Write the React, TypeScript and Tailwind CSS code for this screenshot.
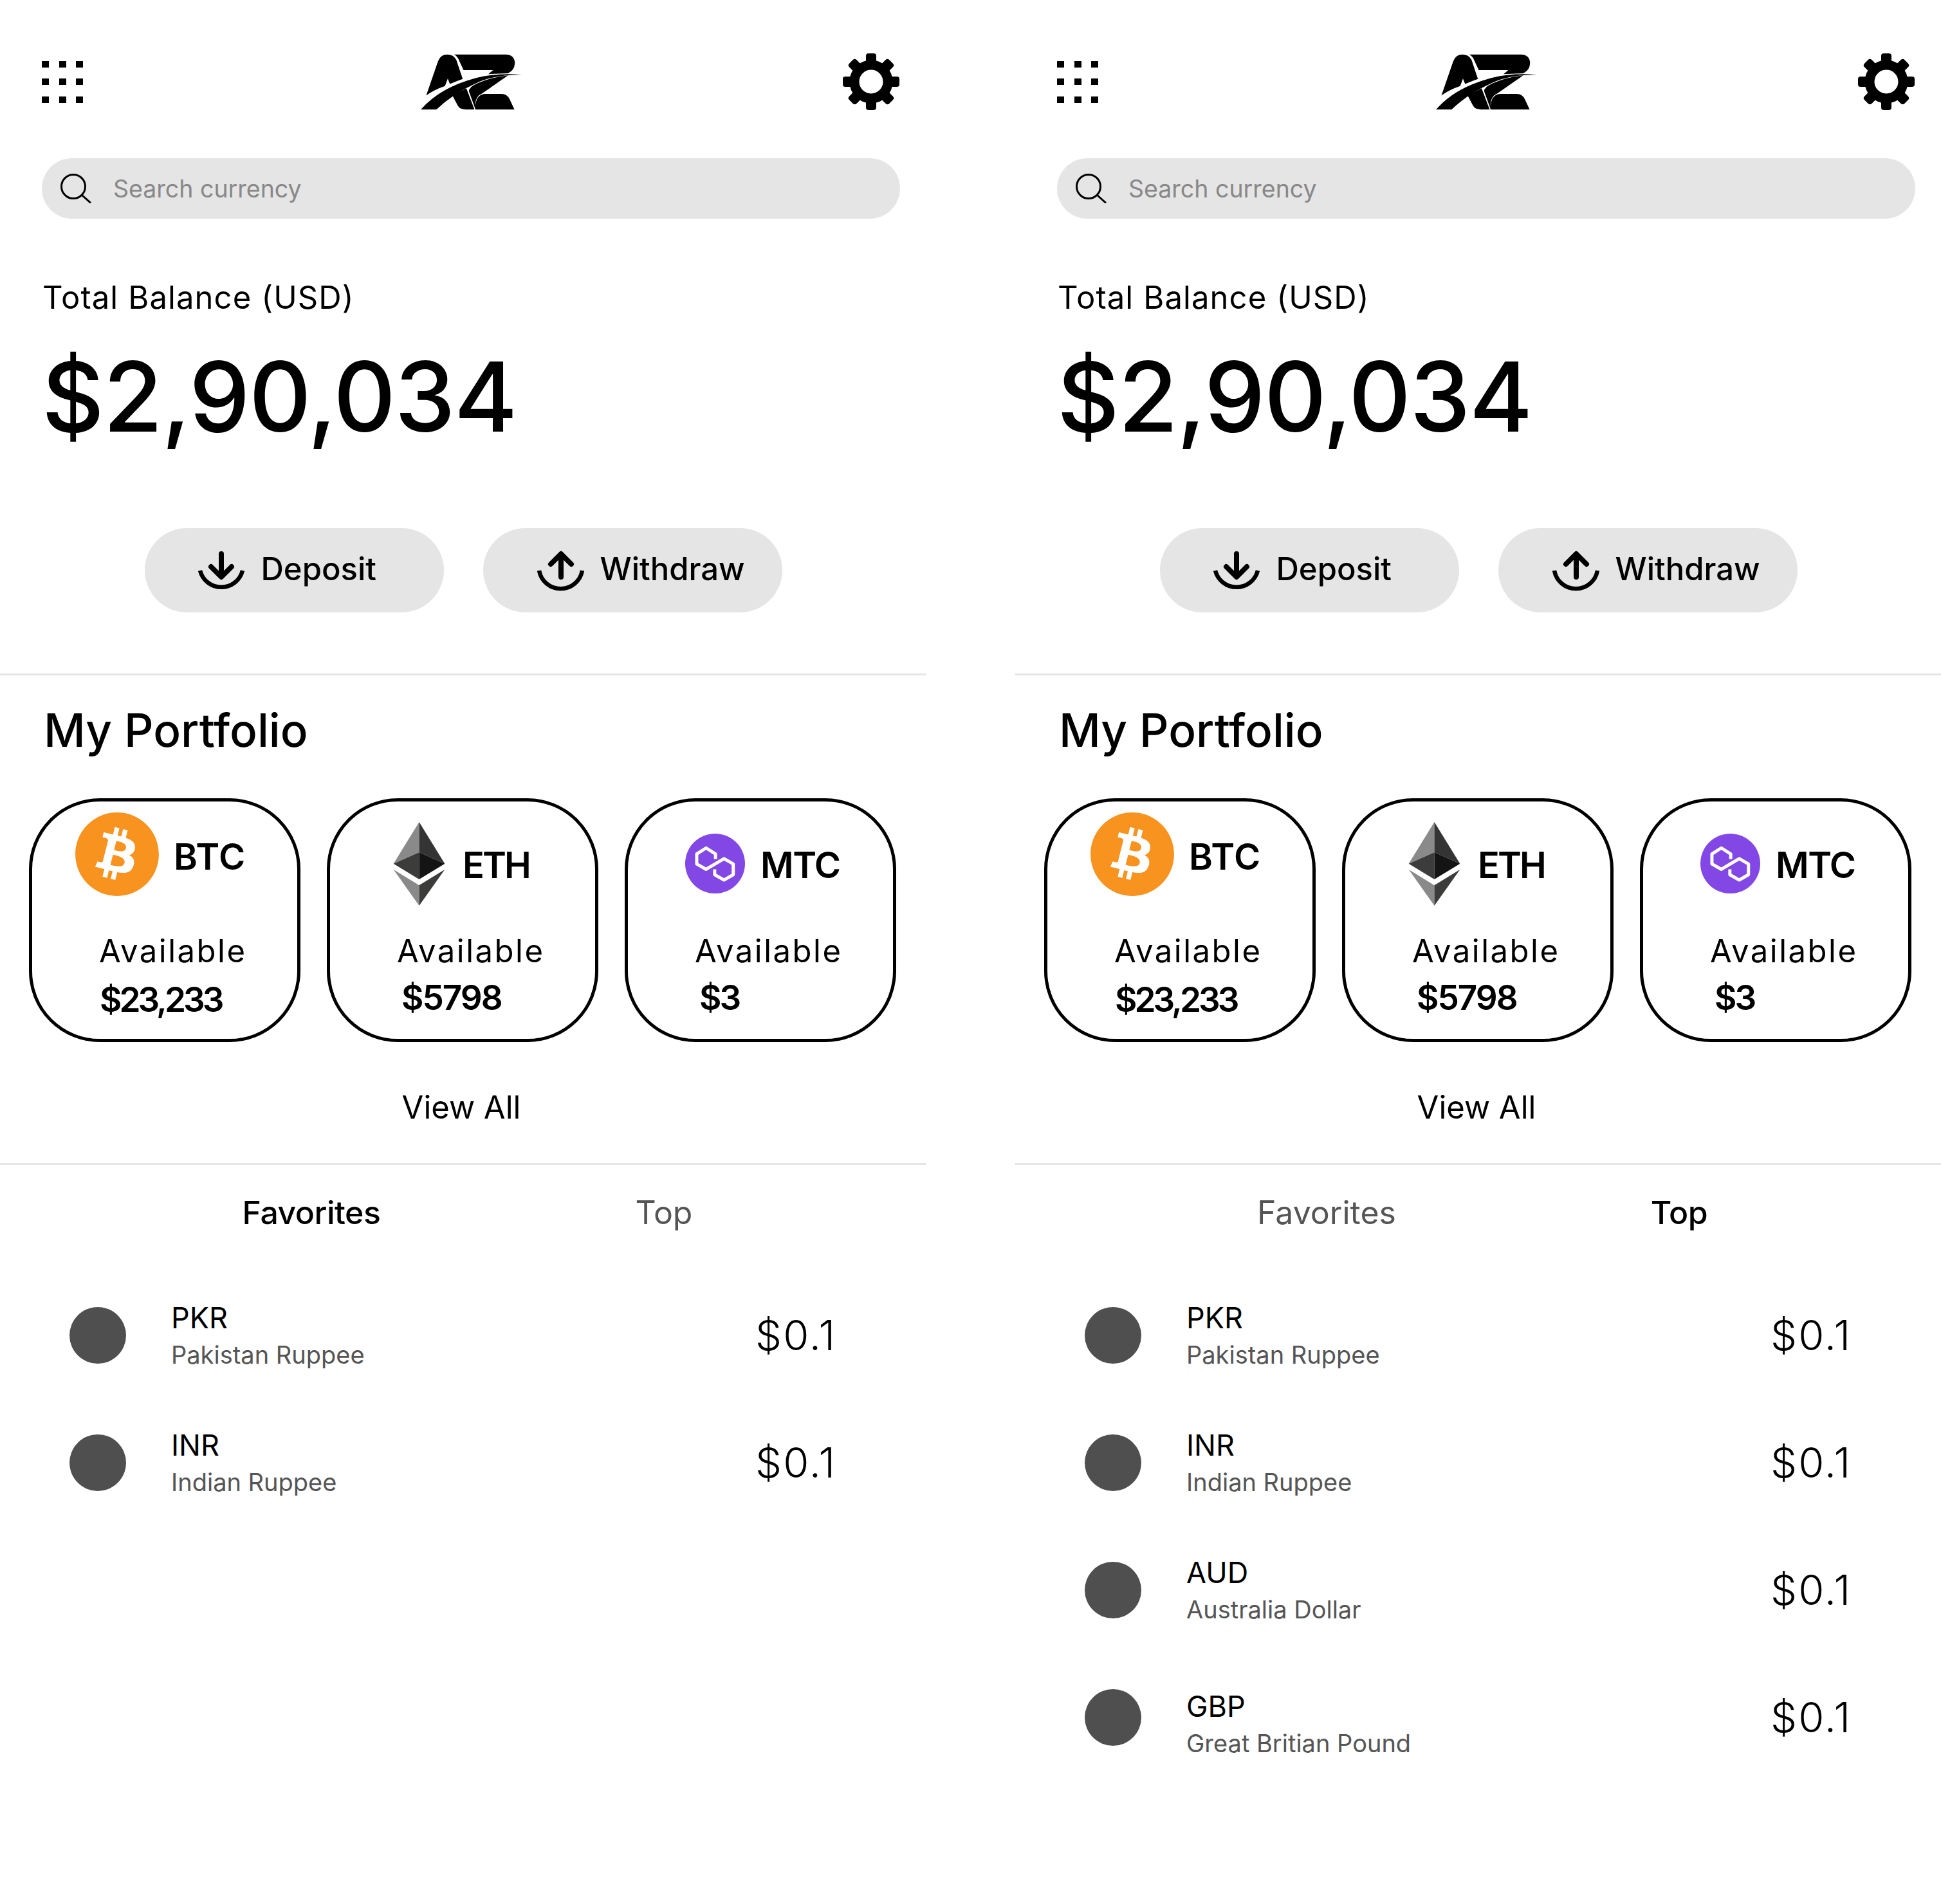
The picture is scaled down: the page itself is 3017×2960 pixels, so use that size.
import type { ReactNode } from 'react';
import { FaBitcoin } from 'react-icons/fa';

const gearAngles = [0, 45, 90, 135, 180, 225, 270, 315];

function GridIcon() {
  return (
    <div className="grid grid-cols-[repeat(3,11px)] w-[64px] h-[65px] gap-x-[15.5px] gap-y-[17.5px] shrink-0">
      {Array.from({ length: 9 }).map((_, i) => (
        <div key={i} className="w-[11px] h-[10px] bg-black" />
      ))}
    </div>
  );
}

function Logo() {
  return (
    <svg viewBox="160 68 476 262" className="w-[159px] h-[87px] ml-[524px] shrink-0" fill="#000">
      <path d="M187 262 L243 100 Q255 70 285 70 Q315 70 328 95 L358 185 Q330 195 298 208 L288 183 L275 218 Q225 235 187 262 Z" />
      <path d="M318 70 L560 70 Q602 72 602 112 Q600 145 570 158 L478 162 L500 143 L362 143 L342 100 Q335 80 318 70 Z" />
      <path d="M162 328 Q250 225 420 180 Q520 155 635 165 Q500 165 420 205 Q310 255 235 328 Z" />
      <path d="M310 262 L335 310 Q345 328 372 328 L413 328 L375 228 Z" />
      <path d="M393 228 Q400 218 425 206 Q490 176 570 168 L450 252 Q420 265 417 300 L418 328 L388 245 Q385 235 393 228 Z" />
      <path d="M417 328 Q415 260 460 255 L540 255 Q565 255 578 280 L600 328 Z" />
    </svg>
  );
}

function GearIcon() {
  return (
    <svg viewBox="0 0 88 88" className="w-[88px] h-[88px] ml-auto mr-[42px] shrink-0">
      {gearAngles.map((a) => (
        <rect key={a} x="36" y="0" width="16" height="24" rx="4" fill="#000" transform={`rotate(${a} 44 44)`} />
      ))}
      <circle cx="44" cy="44" r="26" fill="none" stroke="#000" strokeWidth="15" />
    </svg>
  );
}

function SearchIcon() {
  return (
    <svg viewBox="0 0 48 46" className="w-[48px] h-[46px] shrink-0" fill="none" stroke="#000" strokeWidth="3">
      <circle cx="20" cy="20" r="18.5" />
      <path d="M33 33 L47 45.5" />
    </svg>
  );
}

function DownloadIcon() {
  return (
    <svg viewBox="16 14 78 66" className="w-[78px] h-[66px] shrink-0" fill="none" stroke="#000">
      <path d="M55 21 V56" strokeWidth="8" strokeLinecap="round" />
      <path d="M39 41 L55 57 L71 41" strokeWidth="8" strokeLinecap="round" strokeLinejoin="round" />
      <path d="M22 47 A34 34 0 0 0 88 47" strokeWidth="6.5" />
    </svg>
  );
}

function UploadIcon() {
  return (
    <svg viewBox="18 14 78 66" className="w-[78px] h-[66px] shrink-0" fill="none" stroke="#000">
      <path d="M57 22 V57" strokeWidth="8" strokeLinecap="round" />
      <path d="M41 37 L57 21 L73 37" strokeWidth="8" strokeLinecap="round" strokeLinejoin="round" />
      <path d="M23 47 A34 34 0 0 0 90 47" strokeWidth="6.5" />
    </svg>
  );
}

function EthIcon() {
  return (
    <svg viewBox="38 27 238 388" className="w-[81px] h-[130px] shrink-0 mb-[5px]">
      <polygon points="157,27 38,220 157,167" fill="#8a8a8a" />
      <polygon points="157,27 276,220 157,167" fill="#343434" />
      <polygon points="38,220 157,167 157,293" fill="#3c3c3b" />
      <polygon points="276,220 157,167 157,293" fill="#141414" />
      <polygon points="38,247 157,320 157,415" fill="#8a8a8a" />
      <polygon points="276,247 157,320 157,415" fill="#3c3c3b" />
    </svg>
  );
}

function PolygonIcon() {
  return (
    <svg viewBox="30 33 280 280" className="w-[93px] h-[93px] shrink-0 mb-[5px]">
      <circle cx="170" cy="173" r="140" fill="#8247e5" />
      <path
        d="M172 152 V128 L128 100 L84 128 V175 L128 200 L212 150 L255 175 V225 L212 250 L168 225 V200"
        fill="none"
        stroke="#fff"
        strokeWidth="15"
        strokeLinejoin="round"
      />
    </svg>
  );
}

function CoinCard({ icon, name, headClass, nameClass, amount, amountClass }: {
  icon: ReactNode;
  name: string;
  headClass: string;
  nameClass: string;
  amount: string;
  amountClass: string;
}) {
  return (
    <div className="w-[422px] h-[379px] shrink-0 rounded-[110px] border-[5px] border-black">
      <div className={`h-[198px] flex ${headClass}`}>
        {icon}
        <span className={`text-[56px] font-semibold ${nameClass}`}>{name}</span>
      </div>
      <div className="pl-[104px] text-[49px] tracking-[2.5px] leading-[70px] whitespace-nowrap">Available</div>
      <div className={`text-[53px] leading-[70px] font-semibold ${amountClass}`}>{amount}</div>
    </div>
  );
}

const rows = [
  { code: 'PKR', name: 'Pakistan Ruppee', extra: 'pt-[4px]' },
  { code: 'INR', name: 'Indian Ruppee', extra: 'pt-[4px]' },
  { code: 'AUD', name: 'Australia Dollar', extra: 'pt-[4px]' },
  { code: 'GBP', name: 'Great Britian Pound', extra: 'pt-[24px]' },
];

function Screen({ active, rowCount }: { active: 'Favorites' | 'Top'; rowCount: number }) {
  return (
    <div className="w-[1440px] h-[2960px] shrink-0 pt-[83px]">
      <header className="h-[88px] flex items-center pl-[65px]">
        <GridIcon />
        <Logo />
        <GearIcon />
      </header>

      <div className="mt-[75px] mx-[65px] w-[1334px] h-[94px] rounded-full bg-[#e5e5e5] flex items-center pl-[29px] gap-[34px]">
        <SearchIcon />
        <span className="pt-[2px] text-[37.5px] text-[#888888]">Search currency</span>
      </div>

      <p className="mt-[93px] pl-[66px] text-[49px] leading-[60px] tracking-[1.1px]">Total Balance (USD)</p>
      <p className="mt-[44px] pl-[65px] text-[150px] leading-[160px] font-medium tracking-[-1.5px]">$2,90,034</p>

      <div className="mt-[124px] flex justify-center gap-[61px]">
        <button className="w-[465px] h-[131px] rounded-full bg-[#e5e5e5] flex items-center pl-[80px] gap-[23px] text-[49px] font-medium">
          <DownloadIcon />
          <span className="mb-[3px]">Deposit</span>
        </button>
        <button className="w-[465px] h-[131px] rounded-full bg-[#e5e5e5] flex items-center pl-[82px] gap-[22px] text-[49px] font-medium">
          <UploadIcon />
          <span className="mb-[3px]">Withdraw</span>
        </button>
      </div>

      <div className="mt-[95px] h-[3px] bg-[#e5e5e5]" />

      <h2 className="mt-[45px] pl-[68px] text-[71px] leading-[80px] font-medium">My Portfolio</h2>

      <div className="mt-[66px] pl-[45px] flex gap-[41px]">
        <CoinCard
          icon={<FaBitcoin className="w-[134px] h-[134px] text-[#f7931e] rounded-full shrink-0" />}
          name="BTC"
          headClass="items-start pl-[65px] gap-[21px] pt-[15px]"
          nameClass="mt-[29px] tracking-[0.5px]"
          amount="$23,233"
          amountClass="pl-[105px] mt-[5px] tracking-[-4px]"
        />
        <CoinCard
          icon={<EthIcon />}
          name="ETH"
          headClass="items-center pl-[98px] gap-[27px]"
          nameClass="tracking-[-3px]"
          amount="$5798"
          amountClass="pl-[111px] mt-[2px] tracking-[-2px]"
        />
        <CoinCard
          icon={<PolygonIcon />}
          name="MTC"
          headClass="items-center pl-[89px] gap-[24px]"
          nameClass="tracking-[-1.5px]"
          amount="$3"
          amountClass="pl-[111px] mt-[2px] tracking-[-3px]"
        />
      </div>

      <p className="mt-[72px] pr-[6px] text-center text-[49px] leading-[60px]">View All</p>

      <div className="mt-[56px] h-[3px] bg-[#e5e5e5]" />

      <div className="mt-[44px] flex pl-[334px] gap-[248px] text-[50px] leading-[60px] text-center">
        <span className={active === 'Favorites' ? 'w-[300px] font-medium tracking-[-0.5px]' : 'w-[300px] text-[#555555]'}>Favorites</span>
        <span className={active === 'Top' ? 'w-[300px] font-medium tracking-[-0.5px]' : 'w-[300px] text-[#555555]'}>Top</span>
      </div>

      <div className="mt-[62px]">
        {rows.slice(0, rowCount).map((row) => (
          <div key={row.code} className="h-[198px] flex items-center pl-[108px] pr-[140px]">
            <div className="w-[88px] h-[88px] rounded-full bg-[#4f4f4f] shrink-0" />
            <div className={`ml-[70px] ${row.extra}`}>
              <div className="text-[45px] leading-[56px]">{row.code}</div>
              <div className="text-[38px] leading-[58px] text-[#555555]">{row.name}</div>
            </div>
            <div className="ml-auto text-[65px] font-light tracking-[2px]">$0.1</div>
          </div>
        ))}
      </div>
    </div>
  );
}

export default function App() {
  return (
    <div className="w-[3017px] h-[2960px] overflow-hidden bg-white text-black flex gap-[138px] font-['Inter',sans-serif]">
      <Screen active="Favorites" rowCount={2} />
      <Screen active="Top" rowCount={4} />
    </div>
  );
}
